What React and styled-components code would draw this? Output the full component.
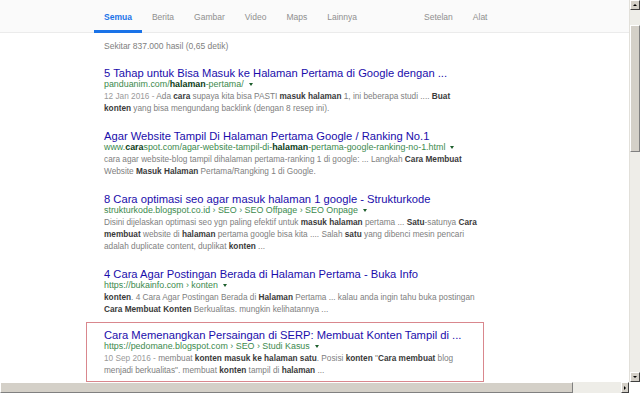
import React from 'react';
import styled, { createGlobalStyle } from 'styled-components';

const GlobalStyle = createGlobalStyle`
    html, body {
        margin: 0;
        padding: 0;
        background: #fff;
        overflow: hidden;
    }
    body {
        font-family: "Liberation Sans", Arial, sans-serif;
    }
`;

const Frame = styled.div`
    width: 640px;
    height: 393px;
    display: flex;
    flex-direction: column;
    background: #fff;
`;

const MainRow = styled.div`
    flex: 1;
    display: flex;
    min-height: 0;
`;

const Viewport = styled.div`
    flex: 1;
    overflow: hidden;
    display: flex;
    flex-direction: column;
`;

// top navigation bar with search tabs
const Header = styled.div`
    height: 32px;
    background: #fafafa;
    border-bottom: 1px solid #ebebeb;
    display: flex;
    align-items: stretch;
    padding-left: 94px;
`;

const Tab = styled.div`
    font-size: 8.5px;
    color: ${props => (props.active ? '#1a73e8' : '#8f8f8f')};
    font-weight: ${props => (props.active ? 'bold' : 'normal')};
    padding: 0 10px;
    display: flex;
    align-items: center;
    border-bottom: 3px solid ${props => (props.active ? '#1a73e8' : 'transparent')};
    margin-bottom: -1px;
    padding-top: 3px;
    margin-left: ${props => props.push || 0}px;
`;

const Results = styled.div`
    padding: 7px 0 0 104px;
`;

const Stats = styled.div`
    font-size: 8.5px;
    line-height: 12px;
    color: #808080;
    margin-bottom: 15px;
`;

const Result = styled.div`
    margin-bottom: ${props => (props.last ? 0 : 16)}px;
`;

const Highlight = styled.div`
    margin: 7px 0 0 -18px;
    width: 379px;
    border: 1px solid #d9878d;
    padding: 6px 0 5px 17px;
`;

const Title = styled.div`
    font-size: 11.2px;
    line-height: 12px;
    color: #1a0dab;
    white-space: nowrap;
`;

const Url = styled.div`
    font-size: 8.9px;
    line-height: 11px;
    color: #3c8a4e;
    white-space: nowrap;
    display: flex;
    align-items: center;

    b {
        color: #0b3d17;
    }
`;

const Caret = styled.span`
    display: inline-block;
    margin-left: 5px;
    width: 0;
    height: 0;
    border-left: 2.5px solid transparent;
    border-right: 2.5px solid transparent;
    border-top: 3.5px solid #1d5e2c;
`;

const Snippet = styled.div`
    font-size: 8.25px;
    line-height: 11px;
    color: #808080;
    white-space: nowrap;
    margin-top: 1px;

    b {
        color: #3a3a3a;
    }
`;

const Date = styled.span`
    color: #9a9a9a;
`;

// classic windows scrollbars
const VScroll = styled.div`
    width: 10px;
    background: #eeede8;
    display: flex;
    flex-direction: column;
    border-left: 1px solid #e2e0da;
`;

const HScrollRow = styled.div`
    height: 11px;
    display: flex;
`;

const HTrack = styled.div`
    flex: 1;
    display: flex;
    background: #eeede8;
`;

const Corner = styled.div`
    width: 11px;
    background: #fff;
`;

const ArrowButton = styled.div`
    width: ${props => (props.horizontal ? 8 : 10)}px;
    height: ${props => (props.horizontal ? 11 : 10)}px;
    background: #d4d0c8;
    border-top: 1px solid #fff;
    border-left: 1px solid #fff;
    border-right: 1px solid #404040;
    border-bottom: 1px solid #404040;
    box-sizing: border-box;
    display: flex;
    align-items: center;
    justify-content: center;
    flex-shrink: 0;
`;

const ArrowGlyph = styled.span`
    width: 0;
    height: 0;
    ${props => props.dir === 'up' && `
        border-left: 2px solid transparent;
        border-right: 2px solid transparent;
        border-bottom: 2px solid #000;
    `}
    ${props => props.dir === 'down' && `
        border-left: 2px solid transparent;
        border-right: 2px solid transparent;
        border-top: 2px solid #000;
    `}
    ${props => props.dir === 'right' && `
        border-top: 2px solid transparent;
        border-bottom: 2px solid transparent;
        border-left: 2px solid #000;
    `}
`;

const Thumb = styled.div`
    background: #d4d0c8;
    border-top: 1px solid #fff;
    border-left: 1px solid #fff;
    border-right: 1px solid #808080;
    border-bottom: 1px solid #808080;
    box-sizing: border-box;
    ${props => (props.horizontal
        ? `width: 573px; height: 11px;`
        : `height: 127px; margin-top: 15px;`)}
`;

const Spacer = styled.div`
    flex: 1;
`;

const tabs = ['Semua', 'Berita', 'Gambar', 'Video', 'Maps', 'Lainnya'];

const results = [
    {
        title: '5 Tahap untuk Bisa Masuk ke Halaman Pertama di Google dengan ...',
        url: <>panduanim.com/<b>halaman</b>-pertama/</>,
        snippet: [
            <><Date>12 Jan 2016 - </Date>Ada <b>cara</b> supaya kita bisa PASTI <b>masuk halaman</b> 1, ini beberapa studi .... <b>Buat</b></>,
            <><b>konten</b> yang bisa mengundang backlink (dengan 8 resep ini).</>,
        ],
    },
    {
        title: 'Agar Website Tampil Di Halaman Pertama Google / Ranking No.1',
        url: <>www.<b>cara</b>spot.com/agar-website-tampil-di-<b>halaman</b>-pertama-google-ranking-no-1.html</>,
        snippet: [
            <>cara agar website-blog tampil dihalaman pertama-ranking 1 di google: ... Langkah <b>Cara Membuat</b></>,
            <>Website <b>Masuk Halaman</b> Pertama/Rangking 1 di Google.</>,
        ],
    },
    {
        title: '8 Cara optimasi seo agar masuk halaman 1 google - Strukturkode',
        url: <>strukturkode.blogspot.co.id › SEO › SEO Offpage › SEO Onpage</>,
        snippet: [
            <>Disini dijelaskan optimasi seo ygn paling efektif untuk <b>masuk halaman</b> pertama ... <b>Satu</b>-satunya <b>Cara</b></>,
            <><b>membuat</b> website di <b>halaman</b> pertama google bisa kita .... Salah <b>satu</b> yang dibenci mesin pencari</>,
            <>adalah duplicate content, duplikat <b>konten</b> ...</>,
        ],
    },
    {
        title: '4 Cara Agar Postingan Berada di Halaman Pertama - Buka Info',
        url: <>https://bukainfo.com › konten</>,
        snippet: [
            <><b>konten</b>. 4 Cara Agar Postingan Berada di <b>Halaman</b> Pertama ... kalau anda ingin tahu buka postingan</>,
            <><b>Cara Membuat Konten</b> Berkualitas. mungkin kelihatannya ...</>,
        ],
    },
];

const featured = {
    title: 'Cara Memenangkan Persaingan di SERP: Membuat Konten Tampil di ...',
    url: <>https://pedomane.blogspot.com › SEO › Studi Kasus</>,
    snippet: [
        <><Date>10 Sep 2016 - </Date>membuat <b>konten masuk ke halaman satu</b>. Posisi <b>konten</b> "<b>Cara membuat</b> blog</>,
        <>menjadi berkualitas". membuat <b>konten</b> tampil di <b>halaman</b> ...</>,
    ],
};

const ResultBody = ({ item }) => (
    <>
        <Title>{item.title}</Title>
        <Url>{item.url}<Caret /></Url>
        {item.snippet.map((line, i) => (
            <Snippet key={i}>{line}</Snippet>
        ))}
    </>
);

const App = () => {
    return (
        <Frame>
            <GlobalStyle />
            <MainRow>
                <Viewport>
                    <Header>
                        {tabs.map((t, i) => (
                            <Tab key={t} active={i === 0}>{t}</Tab>
                        ))}
                        <Tab push={47}>Setelan</Tab>
                        <Tab>Alat</Tab>
                    </Header>
                    <Results>
                        <Stats>Sekitar 837.000 hasil (0,65 detik)</Stats>
                        {results.map((r, i) => (
                            <Result key={i} last={i === results.length - 1}>
                                <ResultBody item={r} />
                            </Result>
                        ))}
                        <Highlight>
                            <ResultBody item={featured} />
                        </Highlight>
                    </Results>
                </Viewport>
                <VScroll>
                    <ArrowButton><ArrowGlyph dir="up" /></ArrowButton>
                    <Thumb />
                    <Spacer />
                    <ArrowButton><ArrowGlyph dir="down" /></ArrowButton>
                </VScroll>
            </MainRow>
            <HScrollRow>
                <HTrack>
                    <Thumb horizontal />
                    <Spacer />
                    <ArrowButton horizontal><ArrowGlyph dir="right" /></ArrowButton>
                </HTrack>
                <Corner />
            </HScrollRow>
        </Frame>
    );
};

export default App;
